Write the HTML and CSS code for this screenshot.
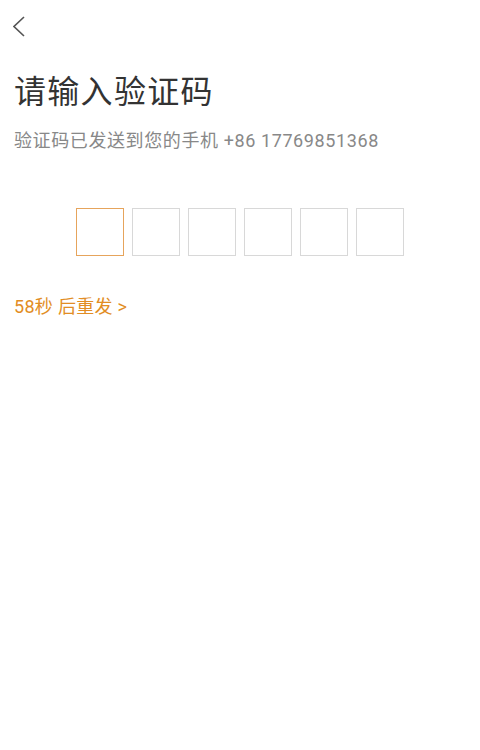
FILE: index.html
```html
<!DOCTYPE html>
<html>
<head>
    <meta charset="utf-8" />
    <title>输入验证码</title>
    <link rel="stylesheet" href="styles.css">
</head>
<body>
    <div class="topbar">
        <a class="vissza" href="#">
            <svg width="14" height="24" viewBox="0 0 14 24">
                <polyline points="11,2 1,11.5 11,21" fill="none" stroke="#555" stroke-width="1.6" />
            </svg>
        </a>
    </div>
    <div class="tartalom">
        <h1 class="cim">请输入验证码</h1>
        <p class="leiras">验证码已发送到您的手机 +86 17769851368</p>

        <div class="kodsor">
            <div class="doboz aktiv"></div>
            <div class="doboz"></div>
            <div class="doboz"></div>
            <div class="doboz"></div>
            <div class="doboz"></div>
            <div class="doboz"></div>
        </div>

        <a class="ujrakuld" href="#">58秒 后重发 &gt;</a>
    </div>
</body>
</html>
```

FILE: styles.css
```css
* {
    box-sizing: border-box;
}

html {
    font-family: Roboto, "Noto Sans CJK SC", sans-serif;
    background-color: #fff;
}

body {
    margin: 0;
}

.topbar {
    height: 52px;
    padding: 15px 0 0 13px;
}

.vissza {
    display: inline-block;
}

.tartalom {
    padding: 0 14px;
}

.cim {
    margin: 20px 0 0 0;
    font-size: 32px;
    line-height: 40px;
    letter-spacing: 1.3px;
    font-weight: normal;
    color: #333;
}

.leiras {
    margin: 17px 0 0 0;
    font-size: 18px;
    line-height: 24px;
    letter-spacing: 0.6px;
    color: #888;
}

.kodsor {
    display: flex;
    justify-content: center;
    gap: 8px;
    margin-top: 55px;
}

.doboz {
    width: 48px;
    height: 48px;
    border: 1px solid #d8d8d8;
}

.doboz.aktiv {
    border-color: #e6a45c;
}

.ujrakuld {
    display: inline-block;
    margin-top: 39px;
    font-size: 18px;
    line-height: 24px;
    letter-spacing: 0.3px;
    color: #e28d24;
    text-decoration: none;
}
```
